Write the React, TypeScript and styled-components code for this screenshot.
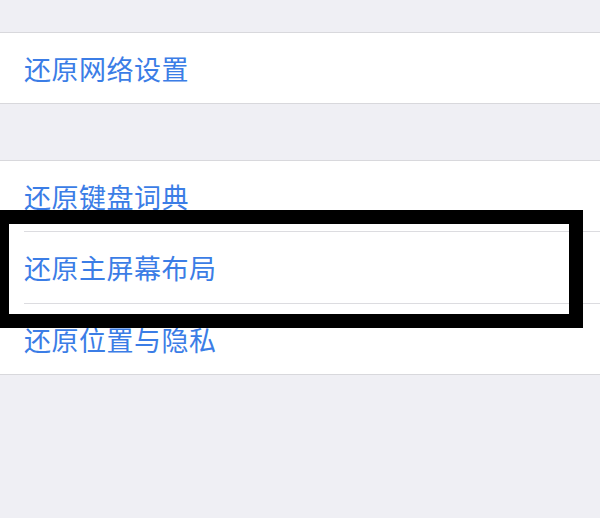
import { FunctionComponent } from "react";
import styled, { createGlobalStyle } from "styled-components";

const GlobalStyle = createGlobalStyle`
  html, body {
    margin: 0;
    padding: 0;
    background-color: #efeff4;
  }
  body {
    font-family: "Noto Sans CJK SC", "Noto Sans", sans-serif;
  }
`;

const Page = styled.div`
  position: relative;
  width: 600px;
  height: 518px;
  overflow: hidden;
  background-color: #efeff4;
  display: flex;
  flex-direction: column;
  padding-top: 32px;
  box-sizing: border-box;
`;

const Group = styled.div<{ $gap?: number }>`
  display: flex;
  flex-direction: column;
  background-color: #ffffff;
  border-top: 1px solid #d8d8dc;
  border-bottom: 1px solid #d8d8dc;
  margin-bottom: ${(p) => p.$gap ?? 0}px;
`;

const Row = styled.div<{ $divider?: boolean; $h?: number }>`
  height: ${(p) => p.$h ?? 70}px;
  display: flex;
  align-items: center;
  padding-left: 24px;
  position: relative;
  ${(p) =>
    p.$divider &&
    `
    &::after {
      content: "";
      position: absolute;
      left: 24px;
      right: 0;
      bottom: -1px;
      height: 1px;
      background-color: #dcdce0;
    }
    margin-bottom: 1px;
  `}
`;

const Label = styled.span`
  font-size: 27px;
  line-height: 1;
  color: #3b7de6;
  letter-spacing: 0.5px;
`;

const Highlight = styled.div`
  position: absolute;
  left: -5px;
  top: 210px;
  width: 588px;
  height: 118px;
  border: 14px solid #000000;
  box-sizing: border-box;
  pointer-events: none;
`;

const App: FunctionComponent = () => {
  return (
    <>
      <GlobalStyle />
      <Page>
        <Group $gap={56}>
          <Row>
            <Label>还原网络设置</Label>
          </Row>
        </Group>
        <Group>
          <Row $divider>
            <Label>还原键盘词典</Label>
          </Row>
          <Row $divider $h={71}>
            <Label>还原主屏幕布局</Label>
          </Row>
          <Row>
            <Label>还原位置与隐私</Label>
          </Row>
        </Group>
        <Highlight />
      </Page>
    </>
  );
};

export default App;
